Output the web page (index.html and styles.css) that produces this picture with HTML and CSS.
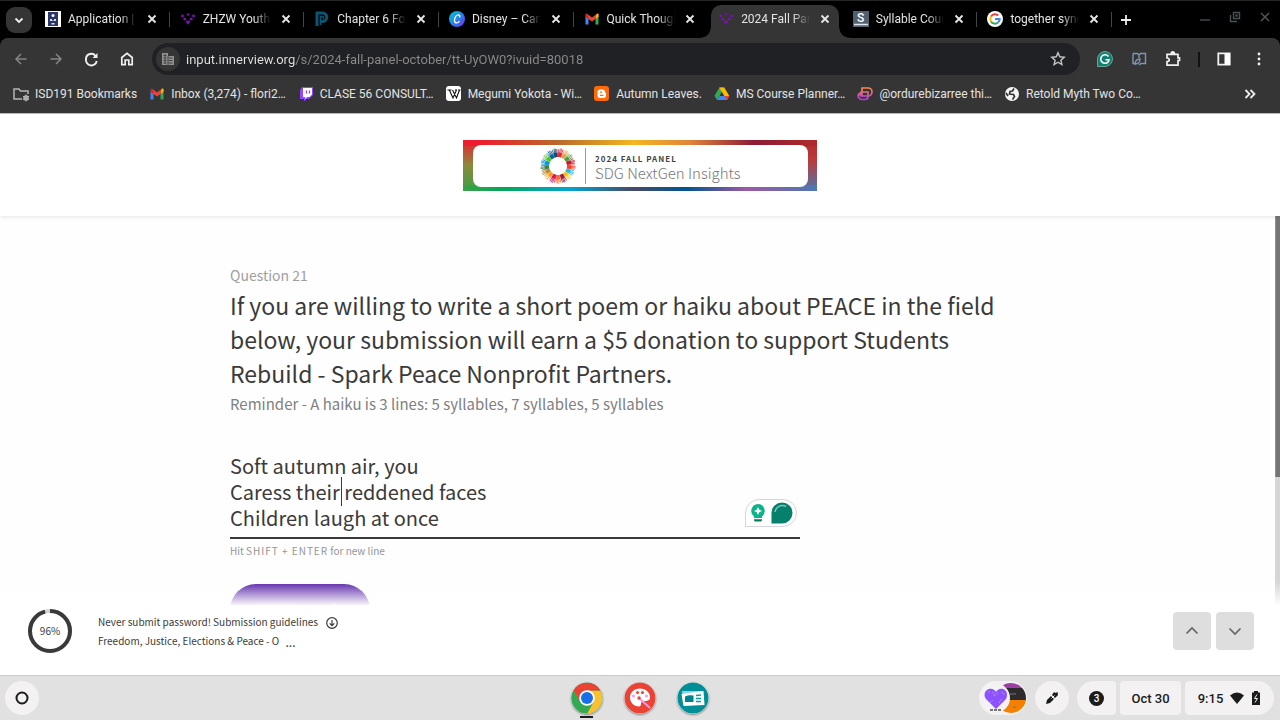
FILE: index.html
```html
<!DOCTYPE html>
<html lang="en">
<head>
  <meta charset="UTF-8">
  <title>2024 Fall Panel - October</title>
  <link rel="stylesheet" href="styles.css">
</head>
<body>
  <svg class="defs" width="0" height="0">
    <symbol id="x" viewBox="0 0 16 16"><path d="M4.500 4.500l7 7M11.500 4.500l-7 7" stroke="#e8e8e8" stroke-width="1.800"/></symbol>
    <symbol id="gmail" viewBox="0 0 16 16">
      <path d="M1.500 4v9.500h3V7z" fill="#4285f4"/><path d="M11.500 7v6.500h3V4z" fill="#34a853"/>
      <path d="M1.500 3.200v2.500l3 2.300V4.600L3.500 3C2.600 2.300 1.500 2.600 1.500 3.200z" fill="#c5221f"/>
      <path d="M14.500 3.200v2.500l-3 2.300V4.600l1-1.600c.9-.7 2-.4 2 .2z" fill="#fbbc04"/>
      <path d="M3.300 2.900L8 6.500l4.700-3.600-1.200 5.100L8 10.600 4.500 8z" fill="#ea4335"/>
    </symbol>
    <symbol id="innerview" viewBox="0 0 16 16">
      <g fill="#7a12ae"><circle cx="2.500" cy="5" r="1.400"/><circle cx="8" cy="3.500" r="1.200"/><circle cx="13.500" cy="5" r="1.400"/><circle cx="4.800" cy="8.200" r="1.400"/><circle cx="11.200" cy="8.200" r="1.400"/><path d="M5.500 10.500L8 9.500l2.500 1L8 13.800z"/></g>
    </symbol>
    <symbol id="hand" viewBox="-20 -20 40 40">
      <path d="M-1.500-9.500L-2-13.500L-2.700-17.500M-.7-9.500L-.8-18.500M.2-9.500L.6-18.500M1.200-9.500L2.100-17.700" stroke="currentColor" stroke-width=".8" fill="none"/>
      <path d="M-1.500-9.500h3L2-14h-4z" fill="currentColor"/>
    </symbol>
  </svg>

  <div class="browser">
    <div class="tab-strip">
      <button class="tab-search" aria-label="Search tabs"><svg viewBox="0 0 16 16" width="16" height="16"><path d="M4.500 6.500L8 10l3.500-3.500" fill="none" stroke="#eee" stroke-width="1.800"/></svg></button>
      <div class="tabs">
        <div class="tab">
          <svg class="icon"><rect width="16" height="16" fill="#fff"/><path d="M3 1h10v14H3z" fill="#2b3669"/><circle cx="8" cy="4.500" r="1.500" fill="#fff"/><path d="M5 8h2v1.500h2V8h2v2H5zM6.500 12h3v1.500h-3z" fill="#dde"/></svg>
          <span>Application | Home</span><button aria-label="Close"><svg><use href="#x"/></svg></button>
        </div>
        <div class="tab">
          <svg class="icon"><use href="#innerview"/></svg>
          <span>ZHZW Youth Advisory</span><button aria-label="Close"><svg><use href="#x"/></svg></button>
        </div>
        <div class="tab">
          <svg class="icon"><path d="M3 15V2h5.500a4.200 4.200 0 010 8.500H6.500" fill="none" stroke="#0b5572" stroke-width="3"/><path d="M6.500 14V5.500h2a1 1 0 010 2" fill="none" stroke="#0b5572" stroke-width="1.500"/></svg>
          <span>Chapter 6 Focus</span><button aria-label="Close"><svg><use href="#x"/></svg></button>
        </div>
        <div class="tab">
          <svg class="icon"><defs><linearGradient id="canva" x1="0" y1="0" x2="1" y2="1"><stop offset="0" stop-color="#00c4cc"/><stop offset=".5" stop-color="#2585ea"/><stop offset="1" stop-color="#7d2ae8"/></linearGradient></defs><circle cx="8" cy="8" r="8" fill="url(#canva)"/><path d="M10.500 6.500c1-2-.5-3-2-2.500C5.500 5 4.500 11 6.700 11.800c1.600.5 3-.6 3.800-1.800" fill="none" stroke="#fff" stroke-width="1.300"/></svg>
          <span>Disney – Canva</span><button aria-label="Close"><svg><use href="#x"/></svg></button>
        </div>
        <div class="tab">
          <svg class="icon"><use href="#gmail"/></svg>
          <span>Quick Thoughts</span><button aria-label="Close"><svg><use href="#x"/></svg></button>
        </div>
        <div class="tab active">
          <svg class="icon"><use href="#innerview"/></svg>
          <span>2024 Fall Panel</span><button aria-label="Close"><svg><use href="#x"/></svg></button>
        </div>
        <div class="tab">
          <svg class="icon"><rect width="16" height="16" fill="#51606f"/><path d="M1 13.500h14" stroke="#dce6ee" stroke-width="1.500"/><text x="4" y="11" font-family="Roboto" font-size="12" font-weight="500" fill="#fff">S</text></svg>
          <span>Syllable Counter</span><button aria-label="Close"><svg><use href="#x"/></svg></button>
        </div>
        <div class="tab">
          <svg class="icon" fill="none" stroke-width="2"><circle cx="8" cy="8" r="8" fill="#fff"/><path d="M11.300 4.500A4.700 4.700 0 004 5.600" stroke="#ea4335"/><path d="M4 5.600a4.700 4.700 0 000 4.800" stroke="#fbbc05"/><path d="M4 10.400a4.700 4.700 0 007 1.200" stroke="#34a853"/><path d="M11 11.600A4.700 4.700 0 0012.700 8H8" stroke="#4285f4"/></svg>
          <span>together synonym</span><button aria-label="Close"><svg><use href="#x"/></svg></button>
        </div>
      </div>
      <button class="new-tab" aria-label="New tab"><svg viewBox="0 0 16 16" width="16" height="16"><path d="M8 3v10M3 8h10" stroke="#eee" stroke-width="1.800"/></svg></button>
      <div class="window-buttons">
        <button aria-label="Minimize"><svg><path d="M3 11h10" stroke="#3e494c" stroke-width="1.500"/></svg></button>
        <button aria-label="Restore"><svg fill="none" stroke="#465255" stroke-width="1.400"><path d="M6.500 3.500h6v6h-6zM3.500 6v6.500H10"/><path d="M9 6h1v1H9z"/></svg></button>
        <button aria-label="Close window"><svg><path d="M4 4l8 8M12 4l-8 8" stroke="#4a5659" stroke-width="1.500"/></svg></button>
      </div>
    </div>

    <div class="toolbar">
      <button aria-label="Back"><svg viewBox="0 0 16 16" fill="none" stroke="#858585" stroke-width="1.500"><path d="M13.500 8H3M8 3L3 8l5 5"/></svg></button>
      <button aria-label="Forward"><svg viewBox="0 0 16 16" fill="none" stroke="#858585" stroke-width="1.500"><path d="M2.500 8H13M8 3l5 5-5 5"/></svg></button>
      <button aria-label="Reload"><svg viewBox="0 0 16 16" fill="none" stroke="#f0f0f0" stroke-width="1.900"><path d="M13.700 10A5.200 5.200 0 113 8a5.200 5.200 0 019.800-2.400"/><path d="M14.500 2v5h-5z" fill="#f0f0f0" stroke="none"/></svg></button>
      <button aria-label="Home"><svg viewBox="0 0 16 16" fill="none" stroke="#f0f0f0" stroke-width="1.700"><path d="M3.800 6.500L9 2.400l5.200 4.100v7.200h-3.400V9H7.200v4.700H3.800z"/></svg></button>
      <div class="omnibox">
        <span class="site-info"><svg viewBox="0 0 16 16" width="16" height="16"><path d="M2 2h6v3h6v9H2z" fill="#909090"/><path d="M3.500 4.500h3M3.500 7h3M3.500 9.500h3M3.500 12h3M8.500 7h4M8.500 9.500h4M8.500 12h4M5 3v10M8 5v9" stroke="#454545"/></svg></span>
        <input type="text" aria-label="Address" value="input.innerview.org/s/2024-fall-panel-october/tt-UyOW0?ivuid=80018">
        <button aria-label="Bookmark this page"><svg viewBox="0 0 16 16"><path d="M8 1.800l1.800 4 4.400.5-3.300 2.900 1 4.300L8 11.200l-3.900 2.300 1-4.300-3.300-2.900 4.400-.5z" fill="none" stroke="#c5c5c5" stroke-width="1.400"/></svg></button>
      </div>
      <div class="extensions">
        <button aria-label="Grammarly"><svg viewBox="0 0 16 16"><path d="M8 .5a7.500 7.500 0 110 15H.5V8A7.500 7.500 0 018 .5z" fill="#0f8270" stroke="#a8cfc8" stroke-width=".6"/><path d="M11.500 5.500A4.300 4.300 0 108 12.300c2.200 0 3.600-1.200 4-3.600H8.500" fill="none" stroke="#fff" stroke-width="1.600"/></svg></button>
        <button aria-label="Reader"><svg viewBox="0 0 16 16" fill="none" stroke="#7f96b5" stroke-width="1.400"><path d="M2 2.500h4.500L8 4l1.500-1.500h5v10H10L8 14M2 2.500v10h2M4 14c0-4 2-6 5-6 0 3-1.500 5-5 5M8 4v3"/></svg></button>
        <button aria-label="Extensions"><svg viewBox="0 0 16 16" fill="none" stroke="#f0f0f0" stroke-width="1.700"><path d="M2 3.300h11v3.500h1.500v2.700H13v4.700H2v-3.700c3 0 3-3.500 0-3.500z"/><path d="M6.200 2.500a1.600 1.600 0 013.200 0z" fill="#f0f0f0"/></svg></button>
        <i></i>
        <button aria-label="Side panel"><svg viewBox="0 0 16 16"><path d="M1.300 2.300h11.400v11.400H1.300z" fill="none" stroke="#f0f0f0" stroke-width="1.800"/><path d="M7.500 2H13v12H7.500z" fill="#fff"/></svg></button>
        <button aria-label="Menu"><svg viewBox="0 0 16 16" fill="#f0f0f0"><circle cx="8" cy="3" r="1.400"/><circle cx="8" cy="8" r="1.400"/><circle cx="8" cy="13" r="1.400"/></svg></button>
      </div>
    </div>

    <nav class="bookmarks">
      <a href="#"><svg class="icon" fill="none" stroke="#b5b5b5" stroke-width="1.500"><path d="M9 13H1V3h5l1.500 2H15v3"/><circle cx="13" cy="12" r="2"/><path d="M13 8.500v7M10 10.200l6 3.500M10 13.700l6-3.500" stroke-width="1"/></svg>ISD191 Bookmarks</a>
      <a href="#"><svg class="icon"><use href="#gmail"/></svg>Inbox (3,274) - flori2…</a>
      <a href="#"><svg class="icon"><path d="M4 1h11v8l-4 4H8.500L6 15.500V13H2V4z" fill="#9146ff"/><path d="M5 2h9v6.500L11.500 11H9l-2 2v-2H5z" fill="#fff"/><path d="M8.500 4.500v3M11.500 4.500v3" stroke="#9146ff" stroke-width="1.300"/></svg>CLASE 56 CONSULT…</a>
      <a href="#"><svg class="icon"><rect width="15" height="15" rx="3" fill="#fff"/><path d="M1.500 4h4M3.300 4L7 12l3.500-8M6.500 4l4 8 3-8M9 4h2M12 4h2.500" fill="none" stroke="#111" stroke-width="1.100"/></svg>Megumi Yokota - Wi…</a>
      <a href="#"><svg class="icon"><rect width="15" height="15" rx="3" fill="#ff6a0a"/><path d="M3.500 6A2.500 2.500 0 016 3.500h2.500C10 3.500 11 4.800 11 6c0 .800 1 .300 1 1.500V9.500A2.500 2.500 0 019.500 12H6a2.500 2.500 0 01-2.500-2.500z" fill="#fff"/><path d="M6 6.200h2M6 9.300h3.500" stroke="#ff6a0a" stroke-width="1.300"/></svg>Autumn Leaves.</a>
      <a href="#"><svg class="icon"><path d="M5.300 1.500h5L5.500 10 3 14 .5 9.800z" fill="#34a853"/><path d="M5.300 1.500h5l5 8.500h-5z" fill="#fbbc04"/><path d="M5.500 10h9.800L13 14H3z" fill="#4285f4"/><path d="M10.300 10h5L13 14z" fill="#ea4335"/></svg>MS Course Planner…</a>
      <a href="#"><svg class="icon" fill="none" stroke-width="1.700"><defs><linearGradient id="ob" x1="0" y1="1" x2="0" y2="0"><stop offset="0" stop-color="#b13be0"/><stop offset="1" stop-color="#ff8748"/></linearGradient></defs><path d="M5 10V2h6a4 4 0 010 8H5a2 2 0 010-4h6v4.500a3 3 0 01-3 3H5a3.700 3.700 0 01-3-6" stroke="url(#ob)"/></svg>@ordurebizarree thi…</a>
      <a href="#"><svg class="icon"><circle cx="8" cy="8" r="7" fill="#f5f5f5"/><path d="M10 2.500L8.500 5 6 5.500 5.500 8l4 .5 1 2-2 3M2 7l2 3" fill="none" stroke="#353535" stroke-width="1.700"/></svg>Retold Myth Two Co…</a>
      <button aria-label="More bookmarks"><svg viewBox="0 0 16 16" width="16" height="16"><path d="M3.500 4l4 4-4 4M8.500 4l4 4-4 4" fill="none" stroke="#eee" stroke-width="1.800"/></svg></button>
    </nav>
  </div>

  <header class="page-header">
    <div class="banner">
      <div class="banner-inner">
        <svg class="wheel" viewBox="-20 -20 40 40" width="38" height="38">
          <g id="wheel"></g>
        </svg>
        <div class="banner-text"><strong>2024 FALL PANEL</strong><span>SDG NextGen Insights</span></div>
      </div>
    </div>
  </header>

  <main class="survey">
    <div class="question">
      <p class="number">Question 21</p>
      <h1 id="prompt">If you are willing to write a short poem or haiku about PEACE in the field below, your submission will earn a $5 donation to support Students Rebuild - Spark Peace Nonprofit Partners.</h1>
      <p class="reminder">Reminder - A haiku is 3 lines: 5 syllables, 7 syllables, 5 syllables</p>
      <div class="answer">
        <textarea rows="3" aria-labelledby="prompt" spellcheck="false">Soft autumn air, you
Caress their reddened faces
Children laugh at once</textarea>
        <span class="caret"></span>
        <div class="grammar">
          <svg width="16" height="20" viewBox="0 0 16 20"><path d="M8 1a7 7 0 00-4 12.500V15h8v-1.500A7 7 0 008 1z" fill="#0db38a"/><path d="M8 4l1.300 2.700L12 8 9.300 9.300 8 12 6.700 9.300 4 8l2.700-1.300z" fill="#fff"/><path d="M4 16.300h8v.700a1.500 1.500 0 01-1.500 1.500h-5A1.500 1.500 0 014 17z" fill="#087a62"/></svg>
          <svg width="22" height="22" viewBox="0 0 22 22"><path d="M11 .5a10.500 10.500 0 110 21H.5V11A10.500 10.500 0 0111 .5z" fill="#05806d"/><path d="M4 10a7.500 7.500 0 0111-5.500" fill="none" stroke="#7fc4b8" stroke-width="1.500"/></svg>
        </div>
      </div>
      <p class="hint">Hit <b>SHIFT + ENTER</b> for new line</p>
      <div class="actions">
        <button class="next">NEXT <svg width="12" height="16" viewBox="0 0 12 16"><path d="M3 2l6 6-6 6" fill="none" stroke="#fff" stroke-width="2"/></svg></button>
        <button class="skip">SKIP</button>
      </div>
    </div>
    <div class="scroll-track"><div class="scroll-thumb"></div></div>
    <div class="fade"></div>
  </main>

  <footer class="survey-footer">
    <div class="progress">
      <svg width="46" height="46" viewBox="0 0 46 46" fill="none" stroke-width="4"><circle cx="23" cy="23" r="20" stroke="#d4d4d4"/><circle cx="23" cy="23" r="20" stroke="#3a3a3a" pathLength="100" stroke-dasharray="96 4" transform="rotate(-90 23 23)"/></svg>
      <span>96%</span>
    </div>
    <div class="notes">
      <p>Never submit password! Submission guidelines <svg width="12" height="12" viewBox="0 0 12 12" fill="none" stroke="#3a3a3a" stroke-width="1.200"><circle cx="6" cy="6" r="5.300"/><path d="M6 3v5.500M3.700 6.300L6 8.700l2.300-2.400"/></svg></p>
      <p>Freedom, Justice, Elections &amp; Peace - O <span>...</span></p>
    </div>
    <div class="pager">
      <button aria-label="Previous question"><svg width="16" height="16" viewBox="0 0 16 16"><path d="M2.500 10.500L8 5l5.500 5.500" fill="none" stroke="#666" stroke-width="1.700"/></svg></button>
      <button aria-label="Next question"><svg width="16" height="16" viewBox="0 0 16 16"><path d="M2.500 5.500L8 11l5.500-5.500" fill="none" stroke="#666" stroke-width="1.700"/></svg></button>
    </div>
  </footer>

  <div class="shelf">
    <div class="shelf-side"><button class="launcher" aria-label="Launcher"><svg width="16" height="16"><circle cx="8" cy="8" r="5.500" fill="none" stroke="#1b1b1b" stroke-width="2"/></svg></button></div>
    <div class="apps">
      <button class="running" aria-label="Chrome"><svg viewBox="0 0 32 32"><circle cx="16" cy="16" r="15.500" fill="#34a853"/><path d="M2.600 8.200L16 8.500h13.400A15.500 15.500 0 0116 31.500L22.500 20 16 9 9.500 20z" fill="#fbc02d"/><path d="M2.600 8.200A15.500 15.500 0 0016 31.500L22.500 20h-13z" fill="#34a853"/><path d="M2.600 8.200A15.500 15.500 0 0129.400 8.500H16L9.500 20z" fill="#ea4335"/><circle cx="16" cy="16" r="7.800" fill="#fff"/><circle cx="16" cy="16" r="6" fill="#1a6fe8"/></svg></button>
      <button aria-label="Canvas"><svg viewBox="0 0 32 32"><circle cx="16" cy="16" r="15.500" fill="#ea4335"/><path d="M16 6.500c-6 0-10 4-10 9s4 9 9 9c3 0 1-3.500 3-5s8 1 8-4c0-5.500-4.500-9-10-9z" fill="#fff"/><g fill="#ea4335"><circle cx="13.500" cy="10.500" r="1.500"/><circle cx="18.500" cy="10.500" r="1.500"/></g><g fill="#e8a0e8"><circle cx="9.500" cy="14" r="1.500"/><circle cx="22.500" cy="14" r="1.500"/></g><path d="M14.500 15.500L26 26" stroke="#e79be9" stroke-width="2"/><circle cx="15" cy="16" r="1.700" fill="#ea4335"/></svg></button>
      <button aria-label="Screencast"><svg viewBox="0 0 32 32"><circle cx="16" cy="16" r="15.500" fill="#008f97"/><path d="M5 9h21l-1 11H6z" fill="#8bd3f5"/><path d="M4.500 12l22-3 1 14-21 1z" fill="#fff"/><path d="M8 14.500q4-2 8.500-1V20H8z" fill="#00838f"/><path d="M19 13.500l5-.5M19 16.500h5M19 19.500h5" stroke="#00a0a8" stroke-width="1.600"/></svg></button>
    </div>
    <div class="shelf-side status">
      <button class="tote" aria-label="Recent files"><svg width="48" height="34" viewBox="0 0 48 34"><clipPath id="c"><circle cx="32" cy="17" r="15"/></clipPath><g clip-path="url(#c)"><path d="M16 0h32v8H16z" fill="#9b3fa5"/><path d="M16 7h32v13H16z" fill="#2e2b2c"/><path d="M16 19h32v15H16z" fill="#f57f00"/></g><path d="M31 13h6M34 26h3" stroke="#777"/><circle cx="16" cy="17" r="15" fill="#f4f2f3"/><path d="M17 28L7 18c-3-4-1-9 3-10 3-1 6 1 7 3 1-2 4-4 7-3 4 1 5 6 3 10z" fill="#8c52ff"/><path d="M9 10l2 2M15 15l4-3M23 11l2 3M11 21l3-2M20 22l3-5M14 11l1 3" stroke="#c7aaff" stroke-dasharray="1 1"/><path d="M11 29h12" stroke="#777" stroke-width="2" stroke-dasharray="3 1"/></svg></button>
      <button class="pill pen" aria-label="Stylus"><svg width="16" height="16" viewBox="0 0 16 16"><path d="M2 14l1-4 4-4L10 9l-4 4zM8 5l2-3 1.500 1L13.500 2 14 5l-3 3z" fill="#1b1b1b"/><path d="M7.500 8.500l3-3" stroke="#f3f1f2"/></svg></button>
      <button class="pill notices" aria-label="Notifications"><span>3</span></button>
      <button class="pill date">Oct 30</button>
      <button class="pill time">9:15 <svg width="16" height="14" viewBox="0 0 16 14"><path d="M1 4.500Q8-1.500 15 4.500L8 13z" fill="#1b1b1b"/></svg><svg width="10" height="14" viewBox="0 0 10 14"><path d="M3 0h4v1.500h2V14H1V1.500h2z" fill="#1b1b1b"/><path d="M6 3.500L3.500 7.500h3L4 11.500" fill="none" stroke="#f3f1f2" stroke-width="1"/></svg></button>
    </div>
  </div>

  <script>
    // seventeen goal colours, clockwise from the top
    const goals = ['#e5243b', '#dda63a', '#4c9f38', '#c5192d', '#ff3a21', '#26bde2', '#fcc30b', '#a21942', '#fd6925', '#dd1367', '#fd9d24', '#bf8b2e', '#3f7e44', '#0a97d9', '#56c02b', '#00689d', '#19486a'];
    document.getElementById('wheel').innerHTML = goals.map((color, i) =>
      `<g color="${color}" transform="rotate(${10 + i * 360 / 17})"><use href="#hand" x="-20" y="-20" width="40" height="40"/></g>`
    ).join('');
  </script>
</body>
</html>
```
FILE: styles.css
```css
* {
  box-sizing: border-box;
}

body {
  margin: 0;
  height: 100vh;
  display: flex;
  flex-direction: column;
  overflow: hidden;
  font-family: "Noto Sans CJK SC", sans-serif;
  color: #3a3a3a;
  background: #fff;
}

button {
  padding: 0;
  border: none;
  background: none;
  font: inherit;
  color: inherit;
  cursor: pointer;
  display: flex;
  align-items: center;
  justify-content: center;
}

p,
h1 {
  margin: 0;
}

.defs {
  position: absolute;
}

.icon {
  width: 16px;
  height: 16px;
  flex: none;
}

/* browser window */
.browser {
  flex: none;
  background: #000;
}

.tab-strip,
.toolbar,
.bookmarks {
  display: flex;
  align-items: center;
  font-family: Roboto, sans-serif;
  font-size: 12px;
  color: #e3e3e3;
  background: #353535;
}

.tab-strip {
  height: 38px;
  padding-left: 6px;
  background: #000;
  border-top: 1px solid #252525;
}

.tab-search {
  width: 26px;
  height: 26px;
  margin-right: 4px;
  border-radius: 9px;
  background: #353535;
}

.tabs {
  display: flex;
  align-self: stretch;
  flex: 0 1 1077px;
  min-width: 0;
}

.tab {
  flex: 1;
  min-width: 0;
  margin-top: 4px;
  padding: 0 11px 5px 9px;
  display: flex;
  align-items: center;
  gap: 7px;
  position: relative;
}

.tab span {
  flex: 1;
  overflow: hidden;
  white-space: nowrap;
  mask-image: linear-gradient(to right, #000 75%, transparent);
}

.tab button,
.tab button svg {
  width: 16px;
  height: 16px;
}

.tab::after {
  content: "";
  position: absolute;
  right: 1px;
  top: 7px;
  width: 1px;
  height: 15px;
  background: #444;
}

.tab:has(+ .active)::after {
  display: none;
}

.tab.active {
  z-index: 0;
}

.tab.active::before {
  content: "";
  position: absolute;
  inset: 0 5px 0 2px;
  z-index: -1;
  border-radius: 10px 10px 0 0;
  background: #353535;
}

/* curved feet of the open tab */
.tab.active::after {
  top: auto;
  bottom: 0;
  left: -8px;
  right: -5px;
  width: auto;
  height: 10px;
  background:
    radial-gradient(circle at 0 0, transparent 9px, #353535 10px) left / 10px 10px no-repeat,
    radial-gradient(circle at 100% 0, transparent 9px, #353535 10px) right / 10px 10px no-repeat;
}

.new-tab {
  margin-left: 5px;
}

.window-buttons {
  margin-left: auto;
  padding: 0 7px 6px 0;
  display: flex;
  gap: 14px;
}

.window-buttons svg {
  width: 16px;
  height: 16px;
}

.toolbar {
  height: 42px;
  padding: 0 12px;
  border-radius: 8px 8px 0 0;
}

.toolbar button {
  flex: none;
  width: 18px;
  height: 18px;
  margin-right: 17px;
}

.toolbar button svg {
  width: 16px;
  height: 16px;
}

.omnibox {
  flex: 1;
  height: 32px;
  padding-left: 4px;
  display: flex;
  align-items: center;
  border-radius: 16px;
  background: #202124;
}

.site-info {
  width: 24px;
  height: 24px;
  border-radius: 50%;
  display: flex;
  align-items: center;
  justify-content: center;
  background: #353535;
}

.omnibox input {
  flex: 1;
  padding: 0 6px;
  border: none;
  outline: none;
  font: 13px Roboto, sans-serif;
  -webkit-text-fill-color: transparent;
  background: linear-gradient(to right, #e3e3e3 115px, #8b8b8b 115px);
  background-clip: text;
}

.omnibox button {
  margin-right: 13px;
}

.extensions {
  display: flex;
  align-items: center;
  padding-left: 16px;
}

.extensions button {
  margin-right: 16px;
}

.extensions button:last-child {
  margin-right: 0;
}

.extensions i {
  width: 2px;
  height: 15px;
  margin-right: 16px;
  background: #111;
}

.bookmarks {
  height: 34px;
  padding: 0 22px 6px 13px;
  gap: 12px;
  border-bottom: 1px solid #bbb;
}

.bookmarks a {
  display: flex;
  align-items: center;
  gap: 6px;
  color: inherit;
  text-decoration: none;
  white-space: nowrap;
}

.bookmarks button {
  margin-left: auto;
}

/* survey page */
.page-header {
  flex: none;
  padding: 26px 0 25px;
  position: relative;
  z-index: 1;
  background: #fff;
  box-shadow: 0 1px 4px rgba(0, 0, 0, 0.1);
}

.banner {
  width: 354px;
  height: 51px;
  margin: 0 auto;
  padding: 5px 9px 4px 10px;
  background:
    linear-gradient(to right, #ed1c2e, #ed1c2e 5%, #b96a2a 27%, #f3b71f 48%, #e0853a 64%, #8d1b37 82%, #b02a2a) top / 100% 6px no-repeat,
    linear-gradient(to right, #3da144, #00a85a 12%, #00a5d0 30%, #464a6a 48%, #00558f 63%, #9c5aa5 80%, #4c78b0) bottom / 100% 6px no-repeat,
    linear-gradient(#ed1c2e, #8a8a3c 50%, #3da144) left / 50% 100% no-repeat,
    linear-gradient(#b02a2a, #b93c3c 40%, #4c78b0) right / 50% 100% no-repeat;
}

.banner-inner {
  height: 100%;
  padding-left: 66px;
  display: flex;
  align-items: center;
  border-radius: 8px;
  background: #fff;
}

.banner-text {
  height: 36px;
  margin-left: 8px;
  padding-left: 9px;
  border-left: 1px solid #999;
  white-space: nowrap;
}

.banner-text strong {
  display: block;
  padding-top: 4px;
  font-size: 8px;
  line-height: 13px;
  letter-spacing: 1px;
  color: #444;
}

.banner-text span {
  display: block;
  font-size: 15px;
  font-weight: 300;
  line-height: 16px;
  color: #777;
}

.survey {
  flex: 1;
  min-height: 0;
  position: relative;
  overflow: hidden;
  background: #fefefe;
}

.question {
  max-width: 820px;
  margin: 0 auto;
  padding-top: 48px;
}

.number {
  font-size: 14px;
  line-height: 22px;
  color: #a0a0a0;
}

.question h1 {
  padding: 2px 30px 0 0;
  font-size: 23px;
  font-weight: 400;
  line-height: 34px;
}

.reminder {
  font-size: 15px;
  line-height: 28px;
  color: #808080;
}

.answer {
  width: 570px;
  margin-top: 35px;
  position: relative;
}

.answer textarea {
  display: block;
  width: 100%;
  height: 86px;
  padding: 0;
  border: none;
  border-bottom: 2px solid #3a3a3a;
  outline: none;
  resize: none;
  overflow: hidden;
  font: 20px/26px "Noto Sans CJK SC", sans-serif;
  color: #3a3a3a;
  background: none;
}

.caret {
  position: absolute;
  left: 111px;
  top: 24px;
  width: 1px;
  height: 29px;
  background: #3a3a3a;
}

.grammar {
  position: absolute;
  right: 3px;
  bottom: 12px;
  width: 52px;
  height: 28px;
  display: flex;
  align-items: center;
  justify-content: center;
  gap: 5px;
  border: 1px solid #d5d5e2;
  border-radius: 14px 14px 14px 0;
  background: #fff;
}

.hint {
  font-size: 10px;
  line-height: 24px;
  color: #959595;
}

.hint b {
  font-weight: 400;
  letter-spacing: 1px;
}

.actions {
  margin-top: 21px;
  display: flex;
}

.next {
  width: 140px;
  height: 52px;
  gap: 38px;
  border-radius: 26px;
  font-size: 14px;
  color: #fff;
  background: #5c26a8;
}

.skip {
  margin-left: 20px;
  font-size: 11px;
  color: #999;
}

.scroll-track {
  position: absolute;
  top: 0;
  right: 0;
  bottom: 0;
  width: 5px;
  background: #d6d6d6;
}

.scroll-thumb {
  height: 67%;
  border-left: 1px solid #8f8f8f;
  background: #757575;
}

.fade {
  position: absolute;
  left: 0;
  right: 0;
  bottom: 0;
  height: 24px;
  background: linear-gradient(rgba(255, 255, 255, 0), #fff);
}

.survey-footer {
  flex: none;
  height: 69px;
  padding: 0 26px 20px 27px;
  display: flex;
  align-items: center;
  background: #fff;
}

.progress {
  width: 46px;
  height: 46px;
  display: grid;
  place-items: center;
  font-size: 10px;
}

.progress > * {
  grid-area: 1 / 1;
}

.notes {
  margin-left: 25px;
  font-size: 10px;
  line-height: 19px;
}

.notes svg {
  margin-left: 6px;
  vertical-align: -3px;
}

.notes span {
  margin-left: 4px;
  font-size: 12px;
  line-height: 1;
  vertical-align: -2px;
}

.pager {
  margin-left: auto;
  display: flex;
  gap: 5px;
}

.pager button {
  width: 38px;
  height: 38px;
  border-radius: 4px;
  background: #dedede;
}

/* system shelf */
.shelf {
  flex: none;
  height: 45px;
  padding: 0 6px 0 5px;
  display: flex;
  align-items: center;
  border-top: 1px solid #ccc;
  background: #e1e1e1;
  font-family: Roboto, sans-serif;
  font-size: 13px;
  font-weight: 500;
  color: #1b1b1b;
}

.shelf-side {
  flex: 1;
  display: flex;
  align-items: center;
}

.launcher,
.pen {
  width: 34px;
  height: 34px;
  border-radius: 50%;
  background: #f3f1f2;
}

.apps {
  display: flex;
  gap: 21px;
}

.apps button {
  position: relative;
}

.apps svg {
  width: 32px;
  height: 32px;
  border-radius: 50%;
  box-shadow: 0 1px 2px rgba(0, 0, 0, 0.4);
}

.running::after {
  content: "";
  position: absolute;
  bottom: -4px;
  width: 13px;
  height: 2px;
  background: #1b1b1b;
}

.status {
  justify-content: flex-end;
}

.tote {
  margin-right: 8px;
  border-radius: 17px;
  background: #f3f1f2;
}

.pill {
  height: 34px;
  background: #f3f1f2;
}

.notices {
  width: 39px;
  margin: 0 4px 0 8px;
  border-radius: 17px 4px 4px 17px;
}

.notices span {
  width: 15px;
  height: 15px;
  border-radius: 50%;
  font-size: 10px;
  line-height: 15px;
  color: #fff;
  background: #1b1b1b;
}

.date {
  width: 61px;
  border-radius: 4px;
}

.time {
  width: 89px;
  margin-left: 4px;
  gap: 6px;
  border-radius: 4px 17px 17px 4px;
}
```
